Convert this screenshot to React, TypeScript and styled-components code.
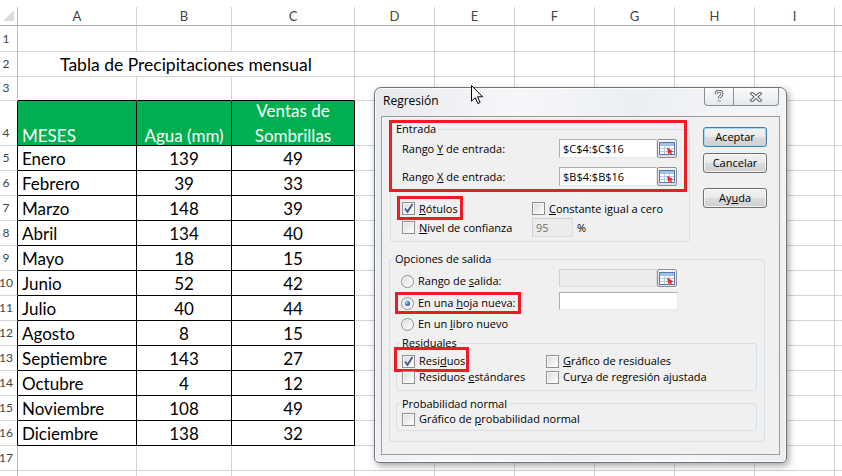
import React from 'react';
import styled, { createGlobalStyle } from 'styled-components';

const GlobalStyle = createGlobalStyle`
  *, *::before, *::after { box-sizing: border-box; }
  html, body { margin: 0; padding: 0; background: #fff; }
  #root { width: 842px; height: 476px; }
`;

const Screen = styled.div`
  position: relative;
  width: 842px;
  height: 476px;
  overflow: hidden;
  background: #fff;
`;

/* ---------- hoja de cálculo ---------- */

const Sheet = styled.div`
  display: grid;
  grid-template-columns: 18px 119px 95px 123px repeat(6, 80px) 1fr;
  grid-template-rows: 19px 26px 25px 24px 45px repeat(14, 25px);
  padding-top: 7px;
  font-family: Lato, "Open Sans", sans-serif;
`;

const Corner = styled.div`
  border-right: 1px solid #bcbcbc;
  border-bottom: 1px solid #ababab;
  display: flex;
  align-items: flex-end;
  justify-content: flex-end;
  padding: 0 3px 4px 0;
`;

const ColHead = styled.div<{ $last?: boolean }>`
  border-right: ${p => (p.$last ? 'none' : '1px solid #d4d4d4')};
  border-bottom: 1px solid #ababab;
  display: flex;
  align-items: center;
  justify-content: center;
  font-size: 13px;
  color: #444;
`;

const RowHead = styled.div<{ $edge?: boolean }>`
  border-right: 1px solid ${p => (p.$edge ? '#000' : '#bcbcbc')};
  border-bottom: 1px solid #d4d4d4;
  display: flex;
  align-items: flex-end;
  justify-content: center;
  padding: 0 5px 4px 0;
  font-size: 12px;
  line-height: 16px;
  color: #444;
`;

const Cell = styled.div<{ $right?: boolean; $bottom?: boolean; $center?: boolean; $span?: number; $last?: boolean }>`
  grid-column: span ${p => p.$span ?? 1};
  border-right: ${p => (p.$last ? 'none' : `1px solid ${p.$right ? '#000' : '#d4d4d4'}`)};
  border-bottom: 1px solid ${p => (p.$bottom ? '#000' : '#d4d4d4')};
  display: flex;
  align-items: flex-end;
  justify-content: ${p => (p.$center ? 'center' : 'flex-start')};
  padding: 0 0 1px ${p => (p.$center ? 0 : 4)}px;
  font-size: 17px;
  line-height: 20px;
  color: #000;
  white-space: nowrap;
`;

const HeadCell = styled(Cell)`
  background: #00b050;
  color: #fff;
  line-height: 25px;
  padding-bottom: 0;
  white-space: normal;
  text-align: center;
`;

const HeadText = styled.span`
  margin-bottom: -3px;
`;

const Title = styled(Cell)`
  font-size: 17.5px;
`;

/* ---------- cuadro de diálogo ---------- */

const Window = styled.div`
  position: absolute;
  left: 374px;
  top: 87px;
  width: 413px;
  height: 376px;
  border: 1px solid #6e747b;
  border-radius: 7px 7px 5px 5px;
  background: linear-gradient(100deg, #e6e9ed 0%, #f6f7f9 30%, #eceff2 55%, #f5f6f8 80%, #eaedf0 100%);
  box-shadow: inset 0 0 0 1px rgba(255, 255, 255, 0.8), 2px 3px 7px rgba(0, 0, 0, 0.35);
  padding: 0 6px 7px 6px;
  display: flex;
  flex-direction: column;
  font-family: "Open Sans", "Noto Sans", sans-serif;
  font-size: 11px;
  color: #000;
`;

const TitleBar = styled.div`
  height: 28px;
  flex: none;
  display: flex;
  justify-content: space-between;
  align-items: flex-start;
`;

const WindowTitle = styled.div`
  padding: 5px 0 0 2px;
  font-size: 12px;
  line-height: 16px;
`;

const CaptionGroup = styled.div`
  display: flex;
  height: 18px;
  margin-right: 1px;
  border: 1px solid #8a8f96;
  border-top: none;
  border-radius: 0 0 4px 4px;
  background: linear-gradient(#fbfbfc, #e4e8ec);
  overflow: hidden;
`;

const CaptionButton = styled.div<{ $w: number }>`
  width: ${p => p.$w}px;
  display: flex;
  align-items: center;
  justify-content: center;
  & + & {
    border-left: 1px solid #8a8f96;
  }
`;

const Client = styled.div`
  position: relative;
  flex: 1;
  border: 1px solid #9a9ea3;
  background: #f0f0f0;
  padding: 4px 0 0 8px;
`;

const TopSection = styled.div`
  display: flex;
  align-items: flex-start;
`;

const Group = styled.fieldset<{ $w: number; $mt?: number; $ml?: number }>`
  margin: ${p => p.$mt ?? 0}px 0 0 ${p => p.$ml ?? 0}px;
  padding: 0;
  min-width: 0;
  width: ${p => p.$w}px;
  border: 1px solid #d5dfe5;
  border-radius: 3px;
`;

const Caption = styled.legend<{ $lh?: number }>`
  padding: 0 2px;
  margin-left: 3px;
  line-height: ${p => p.$lh ?? 16}px;
`;

const GroupBody = styled.div<{ $pad: string }>`
  padding: ${p => p.$pad};
`;

const FieldRow = styled.div`
  display: flex;
  align-items: center;
  height: 19px;
  & + & {
    margin-top: 9px;
  }
`;

const FieldLabel = styled.span`
  width: 157px;
`;

const TextBox = styled.div<{ $w: number; $h?: number; $disabled?: boolean }>`
  width: ${p => p.$w}px;
  height: ${p => p.$h ?? 19}px;
  border: 1px solid ${p => (p.$disabled ? '#cfd1d4' : '#abadb3')};
  border-right-color: ${p => (p.$disabled ? '#dcdde0' : '#e3e9ef')};
  border-bottom-color: ${p => (p.$disabled ? '#dcdde0' : '#e3e9ef')};
  background: ${p => (p.$disabled ? '#ececec' : '#fff')};
  color: ${p => (p.$disabled ? '#6d6d6d' : '#000')};
  padding: 0 3px;
  line-height: ${p => (p.$h ?? 19) - 2}px;
`;

const RefButton = styled.div<{ $h?: number }>`
  width: 20px;
  height: ${p => p.$h ?? 19}px;
  border: 1px solid #8c8f94;
  border-radius: 2px;
  background: linear-gradient(#f6f6f6, #dedede);
  display: flex;
  align-items: center;
  justify-content: center;
`;

const CheckGrid = styled.div<{ $cols: string; $rowH: number; $mt?: number }>`
  display: grid;
  grid-template-columns: ${p => p.$cols};
  grid-auto-rows: ${p => p.$rowH}px;
  align-items: center;
  justify-items: start;
  margin-top: ${p => p.$mt ?? 0}px;
`;

const Option = styled.label`
  display: flex;
  align-items: center;
  gap: 4px;
  line-height: 16px;
  white-space: nowrap;
`;

const Box = styled.span<{ $round?: boolean }>`
  flex: none;
  width: 13px;
  height: 13px;
  border: 1px solid #8e8f8f;
  border-radius: ${p => (p.$round ? '50%' : '0')};
  background: linear-gradient(135deg, #d6d8db 0%, #eeeff0 55%, #ffffff 100%);
  box-shadow: inset 0 0 0 1px #f7f7f7;
  display: flex;
  align-items: center;
  justify-content: center;
`;

const Dot = styled.span`
  width: 5px;
  height: 5px;
  border-radius: 50%;
  background: radial-gradient(circle at 35% 35%, #9edcff 0%, #2a86d0 45%, #0c3f7a 100%);
`;

const Highlight = styled.div<{ $t: number; $r: number; $b: number; $l: number }>`
  border: 3px solid #ed1c24;
  padding: ${p => `${p.$t}px ${p.$r}px ${p.$b}px ${p.$l}px`};
  margin: ${p => `${-p.$t - 3}px ${-p.$r - 3}px ${-p.$b - 3}px ${-p.$l - 3}px`};
`;

const EntradaMark = styled.div`
  position: absolute;
  left: 7px;
  top: 3px;
  width: 298px;
  height: 72px;
  border: 3px solid #ed1c24;
  pointer-events: none;
`;

const Percent = styled.span`
  margin-left: 4px;
`;

const Inline = styled.div`
  display: flex;
  align-items: center;
`;

const OutRow = styled.div<{ $mt?: number }>`
  display: grid;
  grid-template-columns: 158px auto;
  align-items: start;
  justify-items: start;
  margin-top: ${p => p.$mt ?? 0}px;
`;

const Shift = styled.div<{ $mt: number }>`
  margin-top: ${p => p.$mt}px;
`;

const ButtonStack = styled.div`
  display: flex;
  flex-direction: column;
  width: 64px;
  margin: 6px 0 0 13px;
`;

const DlgButton = styled.div<{ $default?: boolean; $gap?: number }>`
  height: 20px;
  margin-top: ${p => p.$gap ?? 0}px;
  border: 1px solid ${p => (p.$default ? '#3c7fb1' : '#707070')};
  border-radius: 3px;
  background: linear-gradient(#f2f2f2 0%, #ebebeb 49%, #dddddd 50%, #cfcfcf 100%);
  box-shadow: inset 0 0 0 1px ${p => (p.$default ? '#a6d8f5' : 'rgba(255,255,255,0.7)')};
  display: flex;
  align-items: center;
  justify-content: center;
  line-height: 16px;
`;

const Cursor = styled.svg`
  position: absolute;
  left: 471px;
  top: 85px;
`;

/* ---------- datos ---------- */

const columns = ['A', 'B', 'C', 'D', 'E', 'F', 'G', 'H', 'I'];

const months: [string, number, number][] = [
  ['Enero', 139, 49],
  ['Febrero', 39, 33],
  ['Marzo', 148, 39],
  ['Abril', 134, 40],
  ['Mayo', 18, 15],
  ['Junio', 52, 42],
  ['Julio', 40, 44],
  ['Agosto', 8, 15],
  ['Septiembre', 143, 27],
  ['Octubre', 4, 12],
  ['Noviembre', 108, 49],
  ['Diciembre', 138, 32],
];

const blanks = (key: string, n = 6) => [
  ...Array.from({ length: n }, (_, i) => <Cell key={`${key}-${i}`} />),
  <Cell key={`${key}-f`} $last />,
];

const RefIcon = () => (
  <svg width="16" height="13" viewBox="0 0 16 13">
    <rect x="0.5" y="0.5" width="15" height="12" fill="#fff" stroke="#4f79b5" />
    <rect x="1" y="1" width="14" height="3" fill="#a3c0e6" />
    <path d="M1 6.5H15M1 9.5H15M5.5 4V12M10.5 4V12" stroke="#b5c9e3" />
    <path d="M8 5.5L14.5 9.5L12.2 10.2L13.6 12.4L12.2 12.9L10.9 10.8L9.2 12.3Z" fill="#e0302a" />
  </svg>
);

const CheckMark = () => (
  <svg width="11" height="11" viewBox="0 0 11 11">
    <path d="M2 5.5L4.5 8.8L9.5 1" fill="none" stroke="#4a5a96" strokeWidth="1.9" />
  </svg>
);

const Check = ({ checked, children }: { checked?: boolean; children: React.ReactNode }) => (
  <Option>
    <Box>{checked && <CheckMark />}</Box>
    <span>{children}</span>
  </Option>
);

const Radio = ({ checked, children }: { checked?: boolean; children: React.ReactNode }) => (
  <Option>
    <Box $round>{checked && <Dot />}</Box>
    <span>{children}</span>
  </Option>
);

const HelpGlyph = 'M2 4.2C2 2.2 3.4 1.2 5 1.2S8 2.2 8 4C8 6.1 5.2 6.3 5.2 8.4M5.2 10.4V11.6';

export default function App() {
  return (
    <Screen>
      <GlobalStyle />
      <Sheet>
        <Corner>
          <svg width="11" height="11" viewBox="0 0 11 11">
            <path d="M11 0V11H0Z" fill="#dcdcdc" />
          </svg>
        </Corner>
        {columns.map(c => (
          <ColHead key={c}>{c}</ColHead>
        ))}
        <ColHead $last />

        <RowHead>1</RowHead>
        <Cell />
        <Cell />
        <Cell />
        {blanks('r1')}

        <RowHead>2</RowHead>
        <Title $span={3} $center>
          Tabla de Precipitaciones mensual
        </Title>
        {blanks('r2')}

        <RowHead>3</RowHead>
        <Cell $bottom />
        <Cell $bottom />
        <Cell $bottom />
        {blanks('r3')}

        <RowHead $edge>4</RowHead>
        <HeadCell $right $bottom>
          <HeadText>MESES</HeadText>
        </HeadCell>
        <HeadCell $right $bottom $center>
          <HeadText>Agua (mm)</HeadText>
        </HeadCell>
        <HeadCell $right $bottom $center>
          <HeadText>
            Ventas de
            <br />
            Sombrillas
          </HeadText>
        </HeadCell>
        {blanks('r4')}

        {months.map(([m, agua, ventas], i) => (
          <React.Fragment key={m}>
            <RowHead $edge>{i + 5}</RowHead>
            <Cell $right $bottom>
              {m}
            </Cell>
            <Cell $right $bottom $center>
              {agua}
            </Cell>
            <Cell $right $bottom $center>
              {ventas}
            </Cell>
            {blanks(`m${i}`)}
          </React.Fragment>
        ))}

        {['17', ''].map((n, i) => (
          <React.Fragment key={`tail${i}`}>
            <RowHead>{n}</RowHead>
            <Cell />
            <Cell />
            <Cell />
            {blanks(`t${i}`)}
          </React.Fragment>
        ))}
      </Sheet>

      <Window>
        <TitleBar>
          <WindowTitle>Regresión</WindowTitle>
          <CaptionGroup>
            <CaptionButton $w={28}>
              <svg width="10" height="13" viewBox="0 0 10 13">
                <path d={HelpGlyph} fill="none" stroke="#555a61" strokeWidth="2.8" />
                <path d={HelpGlyph} fill="none" stroke="#fff" strokeWidth="1.1" />
              </svg>
            </CaptionButton>
            <CaptionButton $w={45}>
              <svg width="12" height="10" viewBox="0 0 12 10">
                <path d="M2 1.5L10 8.5M10 1.5L2 8.5" stroke="#555a61" strokeWidth="3.4" strokeLinecap="square" />
                <path d="M2 1.5L10 8.5M10 1.5L2 8.5" stroke="#fff" strokeWidth="1.4" strokeLinecap="square" />
              </svg>
            </CaptionButton>
          </CaptionGroup>
        </TitleBar>

        <Client>
          <TopSection>
            <Group $w={300}>
              <Caption>Entrada</Caption>
              <GroupBody $pad="2px 0 4px 11px">
                <FieldRow>
                  <FieldLabel>
                    Rango <u>Y</u> de entrada:
                  </FieldLabel>
                  <TextBox $w={98}>$C$4:$C$16</TextBox>
                  <RefButton>
                    <RefIcon />
                  </RefButton>
                </FieldRow>
                <FieldRow>
                  <FieldLabel>
                    Rango <u>X</u> de entrada:
                  </FieldLabel>
                  <TextBox $w={98}>$B$4:$B$16</TextBox>
                  <RefButton>
                    <RefIcon />
                  </RefButton>
                </FieldRow>
                <CheckGrid $cols="130px auto" $rowH={19} $mt={13}>
                  <Highlight $t={2} $r={2} $b={0} $l={2}>
                    <Check checked>
                      <u>R</u>ótulos
                    </Check>
                  </Highlight>
                  <Check>
                    <u>C</u>onstante igual a cero
                  </Check>
                  <Check>
                    <u>N</u>ivel de confianza
                  </Check>
                  <Inline>
                    <TextBox $w={41} $disabled>
                      95
                    </TextBox>
                    <Percent>%</Percent>
                  </Inline>
                </CheckGrid>
              </GroupBody>
            </Group>

            <ButtonStack>
              <DlgButton $default>Aceptar</DlgButton>
              <DlgButton $gap={6}>Cancelar</DlgButton>
              <DlgButton $gap={15}>
                Ay<u>u</u>da
              </DlgButton>
            </ButtonStack>
          </TopSection>

          <Group $w={376} $mt={9} $ml={-1}>
            <Caption>Opciones de salida</Caption>
            <GroupBody $pad="2px 0 10px 11px">
              <OutRow>
                <Shift $mt={4}>
                  <Radio>
                    Rango de <u>s</u>alida:
                  </Radio>
                </Shift>
                <Inline>
                  <TextBox $w={98} $h={18} $disabled />
                  <RefButton $h={18}>
                    <RefIcon />
                  </RefButton>
                </Inline>
              </OutRow>
              <OutRow $mt={3}>
                <Shift $mt={3}>
                  <Highlight $t={0} $r={3} $b={0} $l={3}>
                    <Radio checked>
                      En una <u>h</u>oja nueva:
                    </Radio>
                  </Highlight>
                </Shift>
                <TextBox $w={119} $h={18} />
              </OutRow>
              <Shift $mt={5}>
                <Radio>
                  En un <u>l</u>ibro nuevo
                </Radio>
              </Shift>

              <Group $w={361} $mt={3} $ml={-5}>
                <Caption>Residuales</Caption>
                <GroupBody $pad="2px 0 5px 5px">
                  <CheckGrid $cols="144px auto" $rowH={16}>
                    <Highlight $t={3} $r={1} $b={0} $l={5}>
                      <Check checked>
                        Resi<u>d</u>uos
                      </Check>
                    </Highlight>
                    <Check>
                      <u>G</u>ráfico de residuales
                    </Check>
                    <Check>
                      Residuos <u>e</u>stándares
                    </Check>
                    <Check>
                      Cur<u>v</u>a de regresión ajustada
                    </Check>
                  </CheckGrid>
                </GroupBody>
              </Group>

              <Group $w={361} $mt={5} $ml={-5}>
                <Caption $lh={15}>Probabilidad normal</Caption>
                <GroupBody $pad="0 0 3px 5px">
                  <CheckGrid $cols="auto" $rowH={16}>
                    <Check>
                      Gráfico de <u>p</u>robabilidad normal
                    </Check>
                  </CheckGrid>
                </GroupBody>
              </Group>
            </GroupBody>
          </Group>

          <EntradaMark />
        </Client>
      </Window>

      <Cursor width="13" height="20" viewBox="0 0 13 20">
        <path d="M0.5 0.5V16.2L4.3 12.6L6.8 18.5L9.1 17.5L6.6 11.8H11.6Z" fill="#fff" stroke="#000" strokeLinejoin="miter" />
      </Cursor>
    </Screen>
  );
}
